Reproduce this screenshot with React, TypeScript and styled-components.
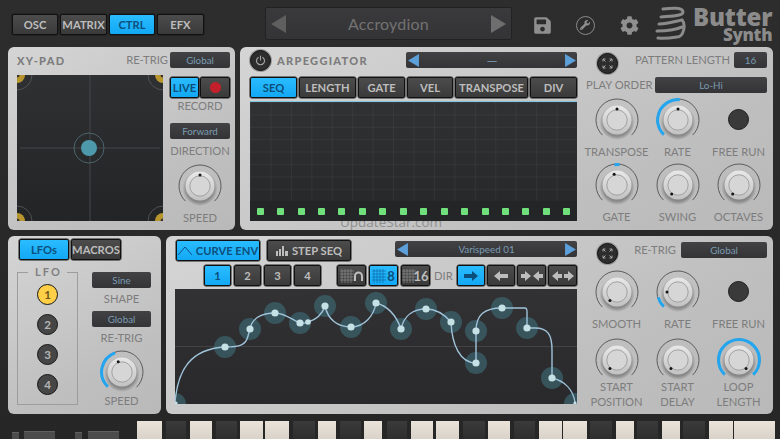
import React from "react";
import styled, { createGlobalStyle } from "styled-components";
import { FaSave, FaCog, FaWrench } from "react-icons/fa";

const Global = createGlobalStyle`
  html, body { margin: 0; padding: 0; background: #2a2a2a; overflow: hidden; }
  * { box-sizing: border-box; }
`;
const Root = styled.div`
  width: 780px; height: 439px; overflow: hidden; display: flex; flex-direction: column;
  background: linear-gradient(#2d2d2d, #262626);
  font-family: "Lato", "Open Sans", sans-serif; color: #7d7d7d;
`;
const Header = styled.header`
  height: 47px; display: flex; align-items: flex-start; padding-left: 12px; position: relative;
`;
const SectionTabs = styled.div`display: flex; gap: 2px; width: 253px; padding-top: 14px;`;
const PresetBox = styled.div`
  width: 247px; height: 33px; margin-top: 7px; display: flex; align-items: center; justify-content: space-between;
  padding: 0 5px 0 5px; border: 1px solid #222; border-radius: 2px; background: linear-gradient(#3a3a3c, #343436);
  color: #727272; font-size: 16px; letter-spacing: .2px;
`;
const HeaderIcons = styled.div`
  display: flex; align-items: center; margin-left: 18px; margin-top: 14px; color: #8f8f8f; gap: 0;
`;
const IconSlot = styled.div<{ $w: number }>`
  width: ${p => p.$w}px; height: 22px; display: flex; align-items: center; justify-content: center;
`;
const WrenchRing = styled.div`
  width: 19px; height: 19px; border-radius: 50%; border: 1.5px solid #8a8a8a; display: flex; align-items: center; justify-content: center;
`;
const Logo = styled.div`
  display: flex; margin-left: 15px; margin-top: 6px; color: #8b8b8b;
`;
const LogoWords = styled.div`
  display: flex; flex-direction: column; align-items: flex-end; margin-left: 7px; font-family: "Open Sans", sans-serif; font-weight: 800;
`;
const LogoMain = styled.div`font-size: 24px; line-height: 21px; letter-spacing: -.2px;`;
const LogoSub = styled.div`font-size: 17px; line-height: 16px; letter-spacing: -.3px;`;

const Row = styled.div<{ $h: number; $mt?: number }>`
  display: flex; gap: 5px; height: ${p => p.$h}px; margin: ${p => p.$mt ?? 0}px 7px 0 8px; flex: none;
`;
const Panel = styled.section<{ $w: number }>`
  width: ${p => p.$w}px; height: 100%; flex: none; position: relative; overflow: hidden; border-radius: 6px;
  background: linear-gradient(150deg, #d5d5d5, #bfbfbf 70%, #b9b9b9);
`;
const PanelRow = styled(Panel)`display: flex;`;

const Btn = styled.div<{ $w: number; $on?: boolean; $h?: number }>`
  width: ${p => p.$w}px; height: ${p => p.$h ?? 21}px; flex: none; display: flex; align-items: center; justify-content: center; gap: 4px;
  border: 1px solid #111; border-radius: 2px; box-shadow: 0 0 0 .5px #1a1a1a;
  font-size: 11.2px; font-weight: 700; white-space: nowrap;
  color: ${p => (p.$on ? "#0d4f7c" : "#bdbdbd")};
  background: ${p => (p.$on ? "linear-gradient(#2abcff, #12a8f4)" : "linear-gradient(#4c4c4c, #3a3a3a)")};
`;
const ModeBtn = styled(Btn)`
  gap: 0; overflow: hidden;
  svg { flex: none; }
`;
const Selector = styled.div<{ $w?: number; $h?: number }>`
  ${p => (p.$w ? `width:${p.$w}px;` : "flex:1;")} height: ${p => p.$h ?? 16}px; flex-shrink: 0;
  display: flex; align-items: center; justify-content: center; border-radius: 2px; background: linear-gradient(#424245, #343437);
  color: #7a9bb2; font-size: 9.8px;
`;
const ArrowSelector = styled(Selector)`justify-content: space-between; padding: 0 1px 0 2px;`;
const Dash = styled.span`font-size: 14px; color: #6f8ea5;`;
const Label = styled.div<{ $fs?: number }>`
  font-size: ${p => p.$fs ?? 11.2}px; line-height: 14px; text-align: center; color: #7d7d7d; white-space: nowrap;
`;
const Title = styled.div`
  font-size: 11px; font-weight: 900; letter-spacing: 1.3px; color: #7c7c7c; white-space: nowrap;
`;

/* XY pad */
const XYCol = styled.div`width: 213px; margin-left: 9px; display: flex; flex-direction: column;`;
const XYHead = styled.div`display: flex; align-items: center; height: 16px; margin-top: 5px;`;
const Spacer = styled.div`flex: 1;`;
const XYBody = styled.div`display: flex; margin-top: 7px;`;
const Pad = styled.div`width: 146px; height: 146px; background: linear-gradient(#2f3032, #232426); flex: none;`;
const XYSide = styled.div`width: 60px; margin-left: 7px; display: flex; flex-direction: column; align-items: center; padding-top: 2px;`;
const LiveRow = styled.div`display: flex; gap: 1px; margin-bottom: 1px;`;
const RecDot = styled.div`width: 11px; height: 11px; border-radius: 50%; background: #c4202c;`;
const Gap = styled.div<{ $h: number }>`height: ${p => p.$h}px; flex: none;`;
const HeadTrig = styled(Selector)`margin-left: 2px;`;

/* Arpeggiator */
const ArpLeft = styled.div`width: 327px; margin-left: 10px; display: flex; flex-direction: column; flex: none; position: relative;`;
const ArpHead = styled.div`display: flex; align-items: center; height: 20px; margin-top: 3px;`;
const RoundIcon = styled.div`
  width: 21px; height: 21px; flex: none; border-radius: 50%; background: #2d2d2d; border: 1px solid #111;
  box-shadow: 0 0 0 1px #9b9b9b; display: flex; align-items: center; justify-content: center; color: #a8a8a8;
`;
const ArpTitle = styled(Title)`margin-left: 6px;`;
const TabRow = styled.div`display: flex; gap: 2px; margin-top: 7px;`;
const BlueLine = styled.div`height: 1px; background: #7cc4e0; margin-top: 3px; position: relative; z-index: 1;`;
const StepGrid = styled.div`
  height: 119px; display: flex; flex-direction: column; position: relative; z-index: 1;
  background: linear-gradient(#303133, #262729);
`;
const Cells = styled.div`
  flex: 1;
  background-image: linear-gradient(rgba(255,255,255,.045) 1px, transparent 1px),
    linear-gradient(90deg, rgba(255,255,255,.045) 1px, transparent 1px);
  background-size: 20.44px 12.4px;
`;
const StepRow = styled.div`
  height: 20px; display: grid; grid-template-columns: repeat(16, 1fr); align-items: center; justify-items: center; background: #242527;
`;
const Step = styled.div`width: 7px; height: 7px; border-radius: 1px; background: #6fe07c;`;
const Watermark = styled.div`
  position: absolute; left: 90px; bottom: 1px; line-height: 14px; font-size: 13.5px; color: #8f8f8f;
  font-family: "Open Sans", sans-serif;
`;
const ArpRight = styled.div`width: 187px; margin-left: 9px; flex: none; padding-top: 3px; display: flex; flex-direction: column;`;
const RightHead = styled.div`display: flex; align-items: center; height: 20px; padding-right: 6px;`;
const ExpandSlot = styled.div`margin-left: 11px; margin-top: 6px; margin-right: 9px;`;
const PlayRow = styled.div`display: flex; align-items: center; margin-top: 7px; padding-right: 6px;`;
const NarrowSel = styled(Selector)`margin-left: 4px;`;
const WideSel = styled(Selector)`margin-left: 5px;`;
const KnobGrid = styled.div<{ $top: number; $gap: number }>`
  display: grid; grid-template-columns: repeat(3, 61px); margin-top: ${p => p.$top}px; row-gap: ${p => p.$gap}px;
`;
const Cell = styled.div`display: flex; flex-direction: column; align-items: center;`;
const KnobLabel = styled(Label)`margin-top: 2px; line-height: 15px;`;
const Toggle = styled.div`
  width: 21px; height: 21px; margin: 11px 0 12px; border-radius: 50%; background: #3a3a3a; border: 1px solid #1c1c1c;
`;

/* LFO */
const LfoTabs = styled.div`display: flex; gap: 2px; padding: 3px 0 0 11px;`;
const LfoBody = styled.div`display: flex; margin: 5px 0 0 9px;`;
const Group = styled.fieldset`
  width: 61px; height: 140px; margin: 0; padding: 5px 0 0; border: 1px solid #9d9d9d; display: flex; flex-direction: column; align-items: center; gap: 9px;
`;
const Legend = styled.legend`
  margin: 0 auto; padding: 0 5px; font-size: 11px; font-weight: 700; line-height: 14px; letter-spacing: 2px; color: #808080; text-indent: 2px;
`;
const LfoDot = styled.div<{ $on?: boolean }>`
  width: 21px; height: 21px; border-radius: 50%; display: flex; align-items: center; justify-content: center; flex: none;
  border: 1.5px solid #151515; font-size: 11.5px; font-weight: 700;
  background: ${p => (p.$on ? "#ffcf48" : "#464646")}; color: ${p => (p.$on ? "#6b5518" : "#b5b5b5")};
`;
const LfoSide = styled.div`width: 59px; margin-left: 14px; padding-top: 7px; display: flex; flex-direction: column; align-items: center;`;

/* Curve */
const CurveLeft = styled.div`width: 402px; margin-left: 9px; flex: none; display: flex; flex-direction: column;`;
const CurveTop = styled.div`display: flex; align-items: flex-start; height: 21px; margin: 4px 0 0 1px;`;
const CurveSel = styled.div`margin-left: 44px; margin-top: 1px; width: 182px;`;
const CurveRow = styled.div`display: flex; align-items: center; gap: 3px; height: 21px; margin-top: 4px; padding-left: 29px;`;
const Spaced = styled.div<{ $w: number }>`width: ${p => p.$w}px; flex: none;`;
const DirLabel = styled(Label)`width: 18px; flex: none; text-align: left; margin: 0 2px 0 1px;`;
const DirGroup = styled.div`display: flex; gap: 2px;`;
const ModeLabel = styled.span<{ $ml?: number }>`font-size: 13px; font-weight: 700; margin-left: ${p => p.$ml ?? 0}px; position: relative;`;
const Canvas = styled.div`
  height: 115px; margin-top: 3px; background: linear-gradient(#323234, #29292b);
`;
const CurveRight = styled.div`width: 187px; margin-left: 9px; flex: none; padding-top: 4px; display: flex; flex-direction: column;`;
const KnobLabel2 = styled(KnobLabel)`white-space: pre-line; margin-top: -3px;`;

/* Keyboard */
const Keyboard = styled.div`height: 18px; margin-top: 7px; position: relative; display: flex; flex: none;`;
const SmallBlock = styled.div<{ $l: number; $w: number; $t: number }>`
  margin-left: ${p => p.$l}px; width: ${p => p.$w}px; margin-top: ${p => p.$t}px; height: 20px; flex: none; background: #4c4c4c; border-top: 1px solid #606060;
`;
const Key = styled.div<{ $black?: boolean; $l: number; $w: number }>`
  margin-left: ${p => p.$l}px; width: ${p => p.$w}px; flex: none; height: 100%;
  background: ${p => (p.$black ? "linear-gradient(#3a3a3a,#2e2e2e)" : "linear-gradient(#e9e3da,#d8d2c8)")};
`;

const pol = (r: number, a: number, cx = 22, cy = 22) => {
  const t = ((a - 90) * Math.PI) / 180;
  return [cx + r * Math.cos(t), cy + r * Math.sin(t)];
};
const arc = (r: number, a: number, b: number) => {
  const [x1, y1] = pol(r, a);
  const [x2, y2] = pol(r, b);
  return `M${x1} ${y1}A${r} ${r} 0 ${b - a > 180 ? 1 : 0} 1 ${x2} ${y2}`;
};

let kid = 0;
const Knob = ({ dot, from, to }: { dot: number; from?: number; to?: number }) => {
  const id = React.useMemo(() => `k${kid++}`, []);
  const [dx, dy] = pol(11, dot, 22, 22);
  return (
    <svg width={44} height={44} viewBox="0 0 44 44">
      <defs>
        <linearGradient id={id} x1="0" y1="0" x2="0" y2="1">
          <stop offset="0" stopColor="#e8e8e8" />
          <stop offset="1" stopColor="#c2c2c2" />
        </linearGradient>
        <radialGradient id={id + "s"} cx=".5" cy=".5" r=".5">
          <stop offset=".78" stopColor="#000" stopOpacity=".28" />
          <stop offset="1" stopColor="#000" stopOpacity="0" />
        </radialGradient>
      </defs>
      <path d={arc(21, -136, 136)} fill="none" stroke="#5c5c5c" strokeWidth="1" />
      {from !== undefined && <path d={arc(20.4, from, to!)} fill="none" stroke="#23a6ef" strokeWidth="3" />}
      <circle cx="22" cy="24.5" r="17.5" fill={`url(#${id}s)`} />
      <circle cx="22" cy="22" r="14.5" fill={`url(#${id})`} />
      <circle cx="22" cy="22" r="10.2" fill="#d6d6d6" stroke="#a2a2a2" strokeWidth="1" />
      <circle cx={dx} cy={dy} r="1.5" fill="#151515" />
    </svg>
  );
};

const Tri = ({ dir, w = 11, h = 13, c = "#5d9fd8" }: { dir: "l" | "r"; w?: number; h?: number; c?: string }) => (
  <svg width={w} height={h} viewBox="0 0 10 12">
    <polygon points={dir === "l" ? "10,0 0,6 10,12" : "0,0 10,6 0,12"} fill={c} />
  </svg>
);
const Expand = () => (
  <RoundIcon>
    <svg width={11} height={11} viewBox="0 0 11 11" fill="none" stroke="#a6a6a6" strokeWidth="1">
      <path d="M1 3.5V1h2.5M1 1l2.5 2.5M10 3.5V1H7.5M10 1 7.5 3.5M1 7.5V10h2.5M1 10l2.5-2.5M10 7.5V10H7.5M10 10 7.5 7.5" />
    </svg>
  </RoundIcon>
);
const MiniGrid = ({ c }: { c: string }) => (
  <svg width={14} height={14} viewBox="0 0 14 14" stroke={c} strokeWidth=".7">
    <path d="M0 2h14M0 5h14M0 8h14M0 11h14M2 0v14M5 0v14M8 0v14M11 0v14" />
  </svg>
);
const arrows = {
  r: "1,4 9,4 9,1 15,6 9,11 9,8 1,8",
  l: "15,4 7,4 7,1 1,6 7,11 7,8 15,8",
};
const Arrow = ({ p, c }: { p: string; c: string }) => (
  <svg width={16} height={12} viewBox="0 0 16 12"><polygon points={p} fill={c} /></svg>
);
const InOut = ({ rev }: { rev?: boolean }) => (
  <svg width={22} height={12} viewBox="0 0 22 12" fill="#bdbdbd">
    {rev ? (
      <>
        <polygon points="10,4 6,4 6,1 0,6 6,11 6,8 10,8" />
        <polygon points="12,4 16,4 16,1 22,6 16,11 16,8 12,8" />
      </>
    ) : (
      <>
        <polygon points="0,4 4,4 4,1 10,6 4,11 4,8 0,8" />
        <polygon points="22,4 18,4 18,1 12,6 18,11 18,8 22,8" />
      </>
    )}
  </svg>
);

const XYCorner = ({ x, y }: { x: number; y: number }) => (
  <>
    <circle cx={x} cy={y} r="15" fill="none" stroke="#5a5c5e" strokeWidth=".8" />
    <circle cx={x} cy={y} r="8" fill="#b8962f" />
    <circle cx={x} cy={y} r="2.5" fill="#3a3428" />
  </>
);

const nodes = [
  [225, 347], [250, 329], [275, 313], [300, 323], [325, 306], [351, 327], [376, 303], [401, 329], [426, 309],
  [451, 322], [476, 331], [476, 363], [502, 308], [527, 328], [552, 378], [575, 404], [175, 404],
];
const curve =
  "M175 402C178 370 190 349 225 347C240 347 246 345 248 336L250 329C252 318 262 313 275 313C285 313 292 320 300 323C303 324 305 323 308 322C315 320 322 315 325 306C328 320 338 327 351 327C365 327 374 315 376 303C388 306 396 315 401 329C404 315 414 309 426 309C436 309 444 314 451 322C452 345 460 363 476 363L476 331C476 315 484 308 502 308L525 308Q527 308 527 312L527 328L535 328C548 328 552 335 552 350L552 378C565 381 573 390 575 402";

const keySpec: [number, number, boolean][] = [
  [137, 162, false], [166, 186, true], [190, 212, false], [216, 237, true], [240, 263, false], [265, 289, false],
  [293, 315, true], [318, 336, false], [340, 361, true], [364, 382, false], [387, 407, true], [411, 433, false],
  [436, 459, false], [463, 485, true], [488, 510, false], [514, 535, true], [539, 562, false], [563, 587, false],
  [590, 612, true], [616, 634, false], [637, 658, true], [662, 680, false], [683, 705, true], [709, 733, false], [734, 775, false],
];

export default function App() {
  let cursor = 119;
  return (
    <Root>
      <Global />
      <Header>
        <SectionTabs>
          <Btn $w={46}>OSC</Btn>
          <Btn $w={47}>MATRIX</Btn>
          <Btn $w={46} $on>CTRL</Btn>
          <Btn $w={47}>EFX</Btn>
        </SectionTabs>
        <PresetBox>
          <Tri dir="l" w={15} h={18} c="#5f5f5f" />
          Accroydion
          <Tri dir="r" w={15} h={18} c="#6e6e6e" />
        </PresetBox>
        <HeaderIcons>
          <IconSlot $w={24}><FaSave size={19} /></IconSlot>
          <IconSlot $w={20} />
          <IconSlot $w={22}><WrenchRing><FaWrench size={10} /></WrenchRing></IconSlot>
          <IconSlot $w={22} />
          <IconSlot $w={22}><FaCog size={19} /></IconSlot>
        </HeaderIcons>
        <Logo>
          <svg width={31} height={36} viewBox="0 0 31 36" fill="none" stroke="#8b8b8b" strokeWidth="3" strokeLinecap="round">
            <path d="M8 3C16 2 28 1 28 6C28 10 18 10 6 11" />
            <path d="M4 18C12 18 22 15 27 14" />
            <path d="M27 14C31 18 29 31 22 31C16 32 9 33 3 32" />
            <path d="M2 25C10 25 20 24 27 21" />
          </svg>
          <LogoWords>
            <LogoMain>Butter</LogoMain>
            <LogoSub>Synth</LogoSub>
          </LogoWords>
        </Logo>
      </Header>

      <Row $h={183}>
        <PanelRow $w={227}>
          <XYCol>
            <XYHead>
              <Title>XY-PAD</Title>
              <Spacer />
              <Label>RE-TRIG</Label>
              <HeadTrig $w={60}>Global</HeadTrig>
            </XYHead>
            <XYBody>
              <Pad>
                <svg width={146} height={146} viewBox="0 0 146 146">
                  <path d="M73 0V146M3 73H143" stroke="#44474a" strokeWidth="1" />
                  <XYCorner x={0} y={0} />
                  <XYCorner x={146} y={0} />
                  <XYCorner x={0} y={146} />
                  <XYCorner x={146} y={146} />
                  <circle cx="72" cy="73" r="15" fill="none" stroke="#4f6a72" strokeWidth=".9" />
                  <circle cx="72" cy="73" r="8" fill="#4d98ab" />
                </svg>
              </Pad>
              <XYSide>
                <LiveRow>
                  <Btn $w={29} $on>LIVE</Btn>
                  <Btn $w={30}><RecDot /></Btn>
                </LiveRow>
                <Label>RECORD</Label>
                <Gap $h={10} />
                <Selector $w={60}>Forward</Selector>
                <Gap $h={5} />
                <Label>DIRECTION</Label>
                <Gap $h={6} />
                <Knob dot={0} />
                <Gap $h={3} />
                <Label>SPEED</Label>
              </XYSide>
            </XYBody>
          </XYCol>
        </PanelRow>

        <PanelRow $w={533}>
          <ArpLeft>
            <ArpHead>
              <RoundIcon>
                <svg width={11} height={11} viewBox="0 0 11 11" fill="none" stroke="#a6a6a6" strokeWidth="1.1" strokeLinecap="round">
                  <path d="M3.2 2.5a4 4 0 1 0 4.6 0M5.5 1v4" />
                </svg>
              </RoundIcon>
              <ArpTitle>ARPEGGIATOR</ArpTitle>
              <Spacer />
              <ArrowSelector $w={171}>
                <Tri dir="l" />
                <Dash>—</Dash>
                <Tri dir="r" />
              </ArrowSelector>
            </ArpHead>
            <TabRow>
              <Btn $w={47} $on>SEQ</Btn>
              <Btn $w={57}>LENGTH</Btn>
              <Btn $w={47}>GATE</Btn>
              <Btn $w={46}>VEL</Btn>
              <Btn $w={73}>TRANSPOSE</Btn>
              <Btn $w={47}>DIV</Btn>
            </TabRow>
            <BlueLine />
            <StepGrid>
              <Cells />
              <StepRow>
                {Array.from({ length: 16 }, (_, i) => <Step key={i} />)}
              </StepRow>
            </StepGrid>
            <Watermark>UpdateStar.com</Watermark>
          </ArpLeft>
          <ArpRight>
            <RightHead>
              <ExpandSlot><Expand /></ExpandSlot>
              <Spacer />
              <Label>PATTERN LENGTH</Label>
              <NarrowSel $w={33}>16</NarrowSel>
            </RightHead>
            <PlayRow>
              <Label>PLAY ORDER</Label>
              <Spacer />
              <Selector $w={112}>Lo-Hi</Selector>
            </PlayRow>
            <KnobGrid $top={5} $gap={4}>
              <Cell><Knob dot={0} /><KnobLabel>TRANSPOSE</KnobLabel></Cell>
              <Cell><Knob dot={0} from={-136} to={5} /><KnobLabel>RATE</KnobLabel></Cell>
              <Cell><Toggle /><KnobLabel>FREE RUN</KnobLabel></Cell>
              <Cell><Knob dot={-15} from={-7} to={7} /><KnobLabel>GATE</KnobLabel></Cell>
              <Cell><Knob dot={-145} /><KnobLabel>SWING</KnobLabel></Cell>
              <Cell><Knob dot={-145} /><KnobLabel>OCTAVES</KnobLabel></Cell>
            </KnobGrid>
          </ArpRight>
        </PanelRow>
      </Row>

      <Row $h={178} $mt={6}>
        <Panel $w={153}>
          <LfoTabs>
            <Btn $w={50} $on>LFOs</Btn>
            <Btn $w={50}>MACROS</Btn>
          </LfoTabs>
          <LfoBody>
            <Group>
              <Legend>LFO</Legend>
              <LfoDot $on>1</LfoDot>
              <LfoDot>2</LfoDot>
              <LfoDot>3</LfoDot>
              <LfoDot>4</LfoDot>
            </Group>
            <LfoSide>
              <Selector $w={59}>Sine</Selector>
              <Gap $h={4} />
              <Label>SHAPE</Label>
              <Gap $h={5} />
              <Selector $w={59}>Global</Selector>
              <Gap $h={4} />
              <Label>RE-TRIG</Label>
              <Gap $h={5} />
              <Knob dot={-20} from={-136} to={-20} />
              <Label>SPEED</Label>
            </LfoSide>
          </LfoBody>
        </Panel>

        <PanelRow $w={607}>
          <CurveLeft>
            <CurveTop>
              <Btn $w={84} $on>
                <svg width={14} height={10} viewBox="0 0 14 10" fill="none" stroke="#0d4f7c" strokeWidth="1"><path d="M0 9 7 1 14 9" /></svg>
                CURVE ENV
              </Btn>
              <Spaced $w={7} />
              <Btn $w={84}>
                <svg width={12} height={10} viewBox="0 0 12 10" fill="#bdbdbd"><path d="M0 5h2v5H0zM3 3h2v7H3zM6 0h2v10H6zM9 5h3v5H9z" /></svg>
                STEP SEQ
              </Btn>
              <CurveSel>
                <ArrowSelector $w={182}>
                  <Tri dir="l" />
                  Varispeed 01
                  <Tri dir="r" />
                </ArrowSelector>
              </CurveSel>
            </CurveTop>
            <CurveRow>
              <Btn $w={27} $on>1</Btn>
              <Btn $w={27}>2</Btn>
              <Btn $w={27}>3</Btn>
              <Btn $w={27}>4</Btn>
              <Spaced $w={10} />
              <ModeBtn $w={29}>
                <MiniGrid c="#8d8d8d" />
                <svg width={9} height={10} viewBox="0 0 9 10" fill="none" stroke="#bdbdbd" strokeWidth="2"><path d="M1 10V5a3.5 3.5 0 0 1 7 0v5" /></svg>
              </ModeBtn>
              <ModeBtn $w={29} $on><MiniGrid c="#0d6aa8" /><ModeLabel $ml={1}>8</ModeLabel></ModeBtn>
              <ModeBtn $w={29}><MiniGrid c="#8d8d8d" /><ModeLabel $ml={-3}>16</ModeLabel></ModeBtn>
              <DirLabel>DIR</DirLabel>
              <DirGroup>
                <Btn $w={28} $on><Arrow p={arrows.r} c="#0d4f7c" /></Btn>
                <Btn $w={28}><Arrow p={arrows.l} c="#bdbdbd" /></Btn>
                <Btn $w={29}><InOut /></Btn>
                <Btn $w={29}><InOut rev /></Btn>
              </DirGroup>
            </CurveRow>
            <Canvas>
              <svg width={402} height={115} viewBox="175 289 402 115">
                <path d="M175 346.5H577" stroke="#434345" strokeWidth="1" />
                {nodes.map(([x, y], i) => <circle key={i} cx={x} cy={y} r="11" fill="#3d6a74" fillOpacity=".65" />)}
                <path d={curve} fill="none" stroke="#9fc3da" strokeWidth="1.4" />
                {nodes.slice(0, 15).map(([x, y], i) => <circle key={i} cx={x} cy={y} r="3.6" fill="#c6e1e6" />)}
                <circle cx="308" cy="322" r="2.8" fill="#c6e1e6" />
                <circle cx="176" cy="403" r="1.6" fill="#c6e1e6" />
                <circle cx="575" cy="403" r="1.6" fill="#c6e1e6" />
              </svg>
            </Canvas>
          </CurveLeft>
          <CurveRight>
            <RightHead>
              <ExpandSlot><Expand /></ExpandSlot>
              <Spacer />
              <Label>RE-TRIG</Label>
              <WideSel $w={86}>Global</WideSel>
            </RightHead>
            <KnobGrid $top={10} $gap={7}>
              <Cell><Knob dot={-140} /><KnobLabel>SMOOTH</KnobLabel></Cell>
              <Cell><Knob dot={-90} from={-136} to={-105} /><KnobLabel>RATE</KnobLabel></Cell>
              <Cell><Toggle /><KnobLabel>FREE RUN</KnobLabel></Cell>
              <Cell><Knob dot={-140} /><KnobLabel2>{"START\nPOSITION"}</KnobLabel2></Cell>
              <Cell><Knob dot={-140} /><KnobLabel2>{"START\nDELAY"}</KnobLabel2></Cell>
              <Cell><Knob dot={140} from={-136} to={136} /><KnobLabel2>{"LOOP\nLENGTH"}</KnobLabel2></Cell>
            </KnobGrid>
          </CurveRight>
        </PanelRow>
      </Row>

      <Keyboard>
        <SmallBlock $l={12} $w={7} $t={11} />
        <SmallBlock $l={5} $w={31} $t={10} />
        <SmallBlock $l={20} $w={7} $t={11} />
        <SmallBlock $l={6} $w={31} $t={10} />
        {keySpec.map(([a, b, black], i) => {
          const l = a - cursor;
          cursor = b;
          return <Key key={i} $l={l} $w={b - a} $black={black} />;
        })}
      </Keyboard>
    </Root>
  );
}
